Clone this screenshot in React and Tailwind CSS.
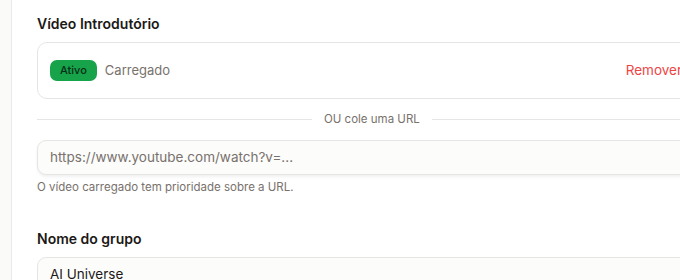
export default function App() {
  return (
    <div className="w-[680px] h-[280px] overflow-hidden flex bg-white" style={{ fontFamily: 'Inter, "Noto Sans", sans-serif' }}>
      <div className="w-[12px] shrink-0 bg-[#fafaf9] border-r border-[#ebe9e6]" />
      <div className="flex-1 pl-[25px] pt-[14px]">
        <div className="w-[670px]">
          <h2 className="text-[14px] leading-[20px] font-semibold text-[#1c1917]">Vídeo Introdutório</h2>
          <div className="mt-[8px] h-[57px] rounded-[10px] border border-[#e7e5e4] bg-white flex items-center pl-[12px] pr-[12px]">
            <span className="h-[21px] px-[10px] rounded-[7px] bg-[#16a34a] text-[#052e16] text-[11px] font-medium flex items-center">Ativo</span>
            <span className="ml-[8px] text-[13px] text-[#78716c]">Carregado</span>
            <span className="ml-auto px-[12px] py-[6px] rounded-[8px] text-[13.5px] text-[#ef4444]">Remover</span>
          </div>
          <div className="mt-[13px] flex items-center gap-[12px]">
            <div className="w-[275px] h-px bg-[#e7e5e4]" />
            <span className="text-[11.5px] leading-[14px] text-[#78716c]">OU cole uma URL</span>
            <div className="flex-1 h-px bg-[#e7e5e4]" />
          </div>
          <div className="mt-[14px] h-[35px] rounded-[9px] border border-[#e7e5e4] bg-[#fcfcfb] shadow-[0_2px_3px_rgba(0,0,0,0.06)] flex items-center pl-[12px] text-[13.5px] text-[#78716c]">
            https://www.youtube.com/watch?v=...
          </div>
          <p className="mt-[5px] text-[11.5px] leading-[14px] text-[#78716c]">O vídeo carregado tem prioridade sobre a URL.</p>
          <h2 className="mt-[35px] text-[14px] leading-[20px] font-semibold text-[#1c1917]">Nome do grupo</h2>
          <div className="mt-[8px] h-[35px] rounded-[9px] border border-[#e7e5e4] bg-[#fcfcfb] flex items-center pl-[12px] text-[13.5px] text-[#1c1917]">
            AI Universe
          </div>
        </div>
      </div>
    </div>
  );
}
